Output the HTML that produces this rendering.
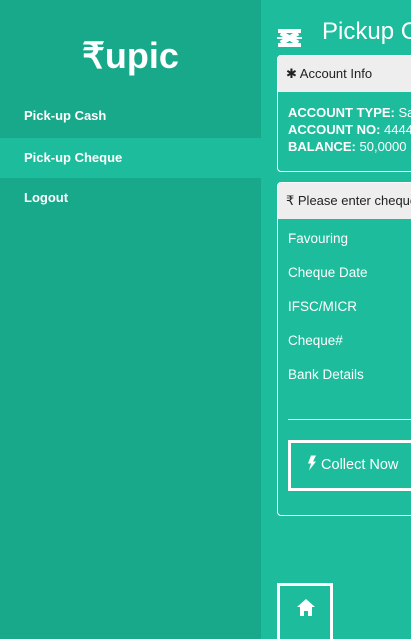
<!DOCTYPE html>
<html><head><meta charset="utf-8"><style>
*{box-sizing:border-box;margin:0;padding:0}
html,body{width:411px;height:639px;overflow:hidden}
body{background:#1cbc9c;font-family:"Liberation Sans",Arial,sans-serif;color:#fff;position:relative}
.side{position:absolute;left:0;top:0;width:261px;height:639px;background:#18a98a}
.logo{position:absolute;left:0;width:261px;top:35px;text-align:center;font-size:36px;font-weight:bold}
.nav{position:absolute;left:0;width:261px;height:40px;line-height:40px;padding-left:24px;font-size:13px;font-weight:bold}
.act{background:#1cbc9c}
.main{position:absolute;left:261px;top:0;width:150px;height:639px;overflow:hidden}
.title{position:absolute;left:61px;top:18px;font-size:24px;white-space:nowrap}
.card{position:absolute;left:16px;width:200px;border:1px solid #fff;border-radius:4px;overflow:hidden}
.hd{background:#eee;color:#222;height:36px;line-height:36px;padding-left:8px;font-size:13px;white-space:nowrap}
.row{position:absolute;left:10px;font-size:13.5px;white-space:nowrap}
</style></head><body>
<div class="side">
<div class="logo">₹upic</div>
<div class="nav" style="top:96px">Pick-up Cash</div>
<div class="nav act" style="top:138px">Pick-up Cheque</div>
<div class="nav" style="top:178px">Logout</div>
</div>
<div class="main">
<svg style="position:absolute;left:16px;top:29px" width="25" height="18" viewBox="0 0 25 18"><rect x="1" y="0" width="23" height="4" fill="#fff"/><rect x="1" y="14" width="23" height="4" fill="#fff"/><path d="M4 4 L21 14 M21 4 L4 14" stroke="#fff" stroke-width="5"/><rect x="0" y="8" width="25" height="2" fill="#fff"/></svg>
<div class="title">Pickup Cheque</div>
<div class="card" style="top:55px;height:117px">
<div class="hd">✱ Account Info</div>
<div class="row" style="top:48px;line-height:17px;font-size:13px"><b>ACCOUNT TYPE:</b> Savings<br><b>ACCOUNT NO:</b> 4444<br><b>BALANCE:</b> 50,0000</div>
</div>
<div class="card" style="top:182px;height:334px">
<div class="hd">₹ Please enter cheque details</div>
<div class="row" style="top:48px">Favouring</div>
<div class="row" style="top:82px">Cheque Date</div>
<div class="row" style="top:116px">IFSC/MICR</div>
<div class="row" style="top:150px">Cheque#</div>
<div class="row" style="top:184px">Bank Details</div>
<div style="position:absolute;left:10px;right:0;top:236px;border-top:1px solid #fff"></div>
<div style="position:absolute;left:10px;top:257px;width:200px;height:51px;border:3px solid #fff;font-size:14.5px;line-height:45px;padding-left:16px;white-space:nowrap"><svg width="10" height="16" viewBox="0 0 10 15" style="vertical-align:-2px"><path d="M4 0 L9 0 L6 6 L9 6 L2 15 L4 8 L1 8 Z" fill="#fff"/></svg> Collect Now</div>
</div>
<div style="position:absolute;left:16px;top:583px;width:56px;height:60px;border:3px solid #fff">
<svg style="position:absolute;left:17px;top:13px" width="18" height="17" viewBox="0 0 18 17"><path d="M9 0 L18 8 L15 8 L15 17 L11 17 L11 12 L7 12 L7 17 L3 17 L3 8 L0 8 Z" fill="#fff"/></svg>
</div>
</div>
</body></html>
